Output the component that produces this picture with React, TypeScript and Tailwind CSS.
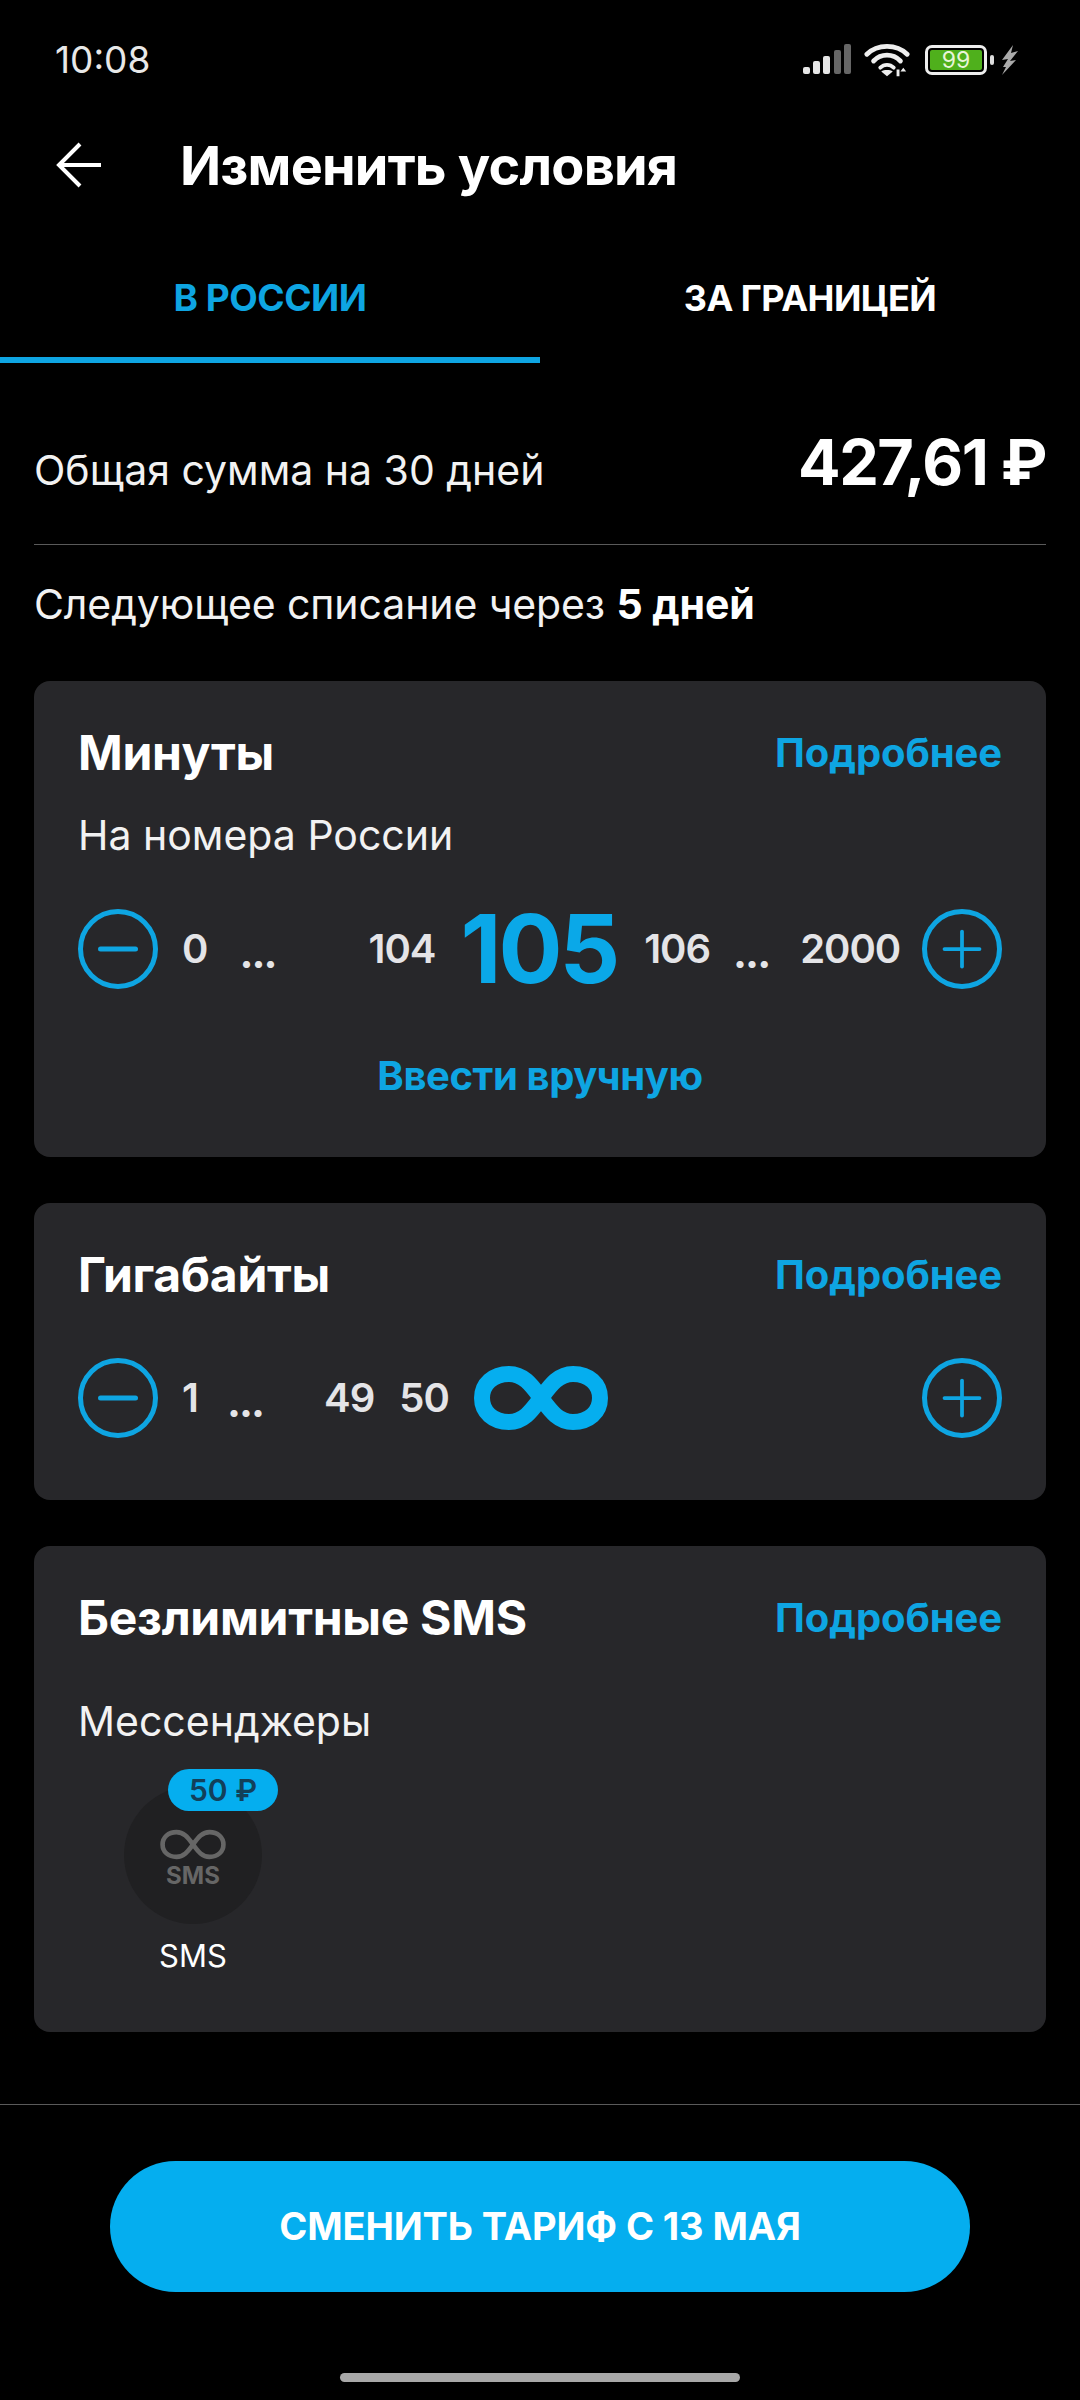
import * as React from "react"
import { Minus, Plus } from "lucide-react"

const font = "font-['Inter','Noto_Sans',sans-serif]"

const InfinityMark = ({ className, strokeWidth = 16 }: { className?: string; strokeWidth?: number }) => (
  <svg viewBox="0 0 134 64" fill="none" className={className}>
    <path
      d="M67 32C58 20 50 8 35 8C19 8 8 18 8 32C8 46 19 56 35 56C50 56 58 44 67 32C76 20 84 8 99 8C115 8 126 18 126 32C126 46 115 56 99 56C84 56 76 44 67 32Z"
      stroke="currentColor"
      strokeWidth={strokeWidth}
    />
  </svg>
)

const RoundButton = ({ kind }: { kind: "minus" | "plus" }) => (
  <div className="flex h-[80px] w-[80px] shrink-0 items-center justify-center rounded-full border-[5px] border-[#0ea5e2] text-[#0ea5e2]">
    {kind === "minus" ? <Minus size={60} strokeWidth={2} /> : <Plus size={60} strokeWidth={1.5} />}
  </div>
)

const CardHeader = ({ title }: { title: string }) => (
  <div className="flex items-center justify-between">
    <h2 className="text-[48px] leading-[60px] font-bold tracking-[-0.3px] text-white">{title}</h2>
    <span className="text-[40px] leading-[60px] font-bold tracking-[-0.1px] text-[#0ea5e2]">Подробнее</span>
  </div>
)

const StatusBar = () => (
  <div className="flex h-[120px] items-center justify-between pr-[61px] pl-[55px]">
    <span className="text-[37px] font-normal text-[#e8e8e8]">10:08</span>
    <div className="flex items-center">
      <svg width="48" height="32" viewBox="0 0 48 32" className="mr-[13px]">
        <rect x="0" y="23" width="7" height="7" rx="2" fill="#e6e6e6" />
        <rect x="10" y="17" width="7" height="13" rx="2" fill="#e6e6e6" />
        <rect x="20" y="12" width="7" height="18" rx="2" fill="#e6e6e6" />
        <rect x="31" y="6" width="7" height="24" rx="2" fill="#666" />
        <rect x="41" y="0" width="7" height="30" rx="2" fill="#666" />
      </svg>
      <svg width="46" height="36" viewBox="0 0 48 36" fill="none" className="mr-[15px]">
        <path d="M3 12C14 1 34 1 45 12" stroke="#eee" strokeWidth="5" strokeLinecap="round" />
        <path d="M10 19C18 11 30 11 38 19" stroke="#eee" strokeWidth="5" strokeLinecap="round" />
        <path d="M17 26C21 22 27 22 31 26" stroke="#eee" strokeWidth="4" strokeLinecap="round" />
        <path d="M24 35L18 30C21 28 27 28 30 30Z" fill="#eee" />
        <path d="M34 28v7h3v-7zM41 26l-3 4h6z" fill="#eee" />
      </svg>
      <div className="flex h-[30px] w-[62px] items-center justify-center rounded-[7px] border-[3px] border-[#eee] p-[2px]">
        <div className="flex h-full w-full items-center justify-center rounded-[2px] bg-[#4fb01c] text-[23px] leading-none text-[#e8f5d8]">
          99
        </div>
      </div>
      <div className="mr-[7px] ml-[3px] h-[10px] w-[4px] rounded-[2px] bg-[#ddd]" />
      <svg width="18" height="30" viewBox="0 0 18 30">
        <path d="M12 0L1 15L7 14L2 22L5 22L1 30L15 15L9 16L17 6L10 8Z" fill="#aaa" />
      </svg>
    </div>
  </div>
)

const Dots = ({ className }: { className?: string }) => (
  <span className={`translate-y-[4px] text-[42px] leading-[38px] font-bold tracking-[-2px] text-[#e4e4e7] ${className ?? ""}`}>
    ...
  </span>
)

const Num = ({ children, className }: { children: React.ReactNode; className?: string }) => (
  <span className={`text-[40px] leading-[38px] font-semibold tracking-[-1px] text-[#e4e4e7] ${className ?? ""}`}>
    {children}
  </span>
)

export default function App() {
  return (
    <div className={`flex h-[2400px] w-[1080px] flex-col bg-black text-white ${font}`}>
      <StatusBar />

      <div className="flex h-[90px] items-center pl-[55px]">
        <svg width="46" height="46" viewBox="0 0 46 46" fill="none" stroke="white" strokeWidth="4" strokeLinejoin="miter">
          <path d="M46 23H4M25 2L4 23L25 44" />
        </svg>
        <h1 className="ml-[79px] text-[54px] font-bold tracking-[-0.8px]">Изменить условия</h1>
      </div>

      {/* Tabs */}
      <div className="mt-[24px] flex h-[129px]">
        <div className="flex w-[540px] items-center justify-center border-b-[6px] border-[#0ea5e2] pt-[4px] text-[37px] font-bold tracking-[-0.5px] text-[#0ea5e2]">
          В РОССИИ
        </div>
        <div className="flex w-[540px] items-center justify-center pb-[2px] text-[36px] font-bold tracking-[-0.5px] text-white">
          ЗА ГРАНИЦЕЙ
        </div>
      </div>

      <div className="px-[34px]">
        <div className="flex h-[182px] items-baseline justify-between border-b border-[#5a5a5a] pt-[68px]">
          <span className="text-[41px] leading-[62px] text-[#f2f2f2]">Общая сумма на 30 дней</span>
          <span className="text-[63px] leading-[62px] font-bold tracking-[-1.5px]">427,61 ₽</span>
        </div>
        <p className="mt-[36px] text-[41px] leading-[46px] tracking-[-0.1px] text-[#f2f2f2]">
          Следующее списание через <b className="font-bold text-white">5 дней</b>
        </p>

        {/* Minutes */}
        <section className="mt-[54px] h-[476px] rounded-[16px] bg-[#27272a] px-[44px] pt-[42px]">
          <CardHeader title="Минуты" />
          <p className="mt-[29px] text-[41px] leading-[46px] text-[#f2f2f2]">На номера России</p>
          <div className="mt-[46px] flex items-center">
            <RoundButton kind="minus" />
            <Num className="ml-[24px]">0</Num>
            <Dots className="ml-[32px]" />
            <Num className="ml-[93px]">104</Num>
            <span className="ml-[25px] text-[95px] leading-[90px] font-bold tracking-[-3px] text-[#0aa8e8]">105</span>
            <Num className="ml-[27px]">106</Num>
            <Dots className="ml-[23px]" />
            <Num className="ml-[31px]">2000</Num>
            <div className="ml-auto">
              <RoundButton kind="plus" />
            </div>
          </div>
          <div className="mt-[59px] text-center text-[40px] leading-[46px] font-bold tracking-[-0.4px] text-[#0ea5e2]">
            Ввести вручную
          </div>
        </section>

        {/* Gigabytes */}
        <section className="mt-[46px] h-[297px] rounded-[16px] bg-[#27272a] px-[44px] pt-[42px]">
          <CardHeader title="Гигабайты" />
          <div className="mt-[53px] flex items-center">
            <RoundButton kind="minus" />
            <Num className="ml-[24px]">1</Num>
            <Dots className="ml-[29px]" />
            <Num className="ml-[61px]">49</Num>
            <Num className="ml-[25px]">50</Num>
            <InfinityMark className="ml-[25px] h-[64px] w-[134px] text-[#05aeef]" />
            <div className="ml-auto">
              <RoundButton kind="plus" />
            </div>
          </div>
        </section>

        {/* SMS */}
        <section className="mt-[46px] h-[486px] rounded-[16px] bg-[#27272a] px-[44px] pt-[42px]">
          <CardHeader title="Безлимитные SMS" />
          <p className="mt-[50px] text-[41px] leading-[46px] text-[#f2f2f2]">Мессенджеры</p>
          <div className="mt-[29px] ml-[46px] flex w-[138px] flex-col items-center">
            <div className="relative mt-[13px] flex h-[138px] w-[138px] flex-col items-center justify-center rounded-full bg-[#202022] text-[#666]">
              <span className="absolute -top-[17px] left-[44px] flex h-[42px] w-[110px] items-center justify-center rounded-full bg-[#05aeef] text-[30px] font-semibold text-[#12405a]">
                50 ₽
              </span>
              <InfinityMark className="mt-[8px] h-[33px] w-[70px]" strokeWidth={9} />
              <span className="text-[24px] leading-[30px] font-bold">SMS</span>
            </div>
            <span className="mt-[13px] text-[31px] leading-[38px] text-white">SMS</span>
          </div>
        </section>
      </div>

      {/* Footer */}
      <div className="mt-[72px] flex flex-1 flex-col items-center border-t border-[#5a5a5a]">
        <button className="mt-[56px] flex h-[131px] w-[860px] items-center justify-center rounded-full bg-[#05aeef] text-[38px] font-bold tracking-[-0.1px] text-white">
          СМЕНИТЬ ТАРИФ С 13 МАЯ
        </button>
        <div className="mt-[81px] h-[9px] w-[400px] rounded-full bg-[#a8a8a8]" />
      </div>
    </div>
  )
}
